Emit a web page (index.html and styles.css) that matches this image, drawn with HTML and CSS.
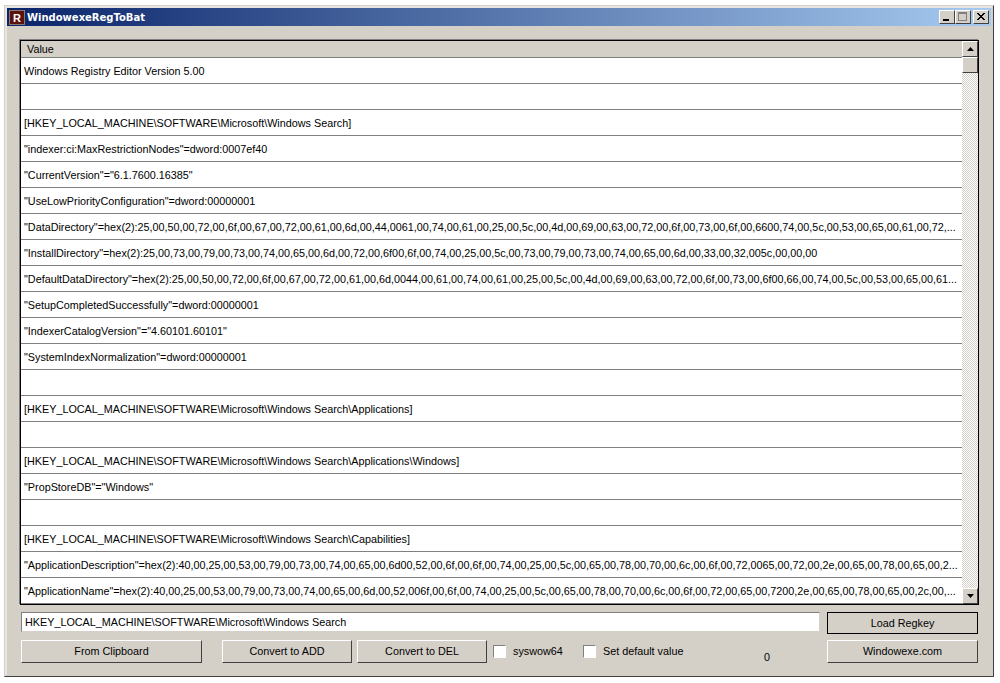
FILE: index.html
```html
<!DOCTYPE html>
<html lang="en">
<head>
<meta charset="utf-8">
<title>WindowexeRegToBat</title>
<link rel="stylesheet" href="styles.css">
</head>
<body>
<div class="window">
  <div class="titlebar">
    <svg class="app-icon" width="16" height="15" viewBox="0 0 16 15"><rect width="16" height="15" fill="#8c7a76"/><rect x="1" y="1" width="14" height="13" fill="#5a120c"/><text x="8" y="12" text-anchor="middle" class="icon-letter">R</text></svg>
    <span class="title">WindowexeRegToBat</span>
    <div class="caption-buttons">
      <button class="cap"><svg width="16" height="14" viewBox="0 0 16 14"><rect x="4" y="9" width="6" height="2" fill="#000"/></svg></button>
      <button class="cap"><svg width="16" height="14" viewBox="0 0 16 14"><rect x="3.500" y="2.500" width="8" height="8" fill="none" stroke="#808080"/><rect x="3" y="2" width="9" height="2" fill="#808080"/></svg></button>
      <button class="cap cap-close"><svg width="16" height="14" viewBox="0 0 16 14"><path d="M4 3l7 7M5 3l7 7M11 3l-7 7M12 3l-7 7" stroke="#000" fill="none"/></svg></button>
    </div>
  </div>
  <div class="client">
    <div class="list">
      <div class="table">
        <div class="head">Value</div>
        <div class="row">Windows Registry Editor Version 5.00</div>
        <div class="row"></div>
        <div class="row">[HKEY_LOCAL_MACHINE\SOFTWARE\Microsoft\Windows Search]</div>
        <div class="row">"indexer:ci:MaxRestrictionNodes"=dword:0007ef40</div>
        <div class="row">"CurrentVersion"="6.1.7600.16385"</div>
        <div class="row">"UseLowPriorityConfiguration"=dword:00000001</div>
        <div class="row">"DataDirectory"=hex(2):25,00,50,00,72,00,6f,00,67,00,72,00,61,00,6d,00,44,0061,00,74,00,61,00,25,00,5c,00,4d,00,69,00,63,00,72,00,6f,00,73,00,6f,00,6600,74,00,5c,00,53,00,65,00,61,00,72,...</div>
        <div class="row">"InstallDirectory"=hex(2):25,00,73,00,79,00,73,00,74,00,65,00,6d,00,72,00,6f00,6f,00,74,00,25,00,5c,00,73,00,79,00,73,00,74,00,65,00,6d,00,33,00,32,005c,00,00,00</div>
        <div class="row">"DefaultDataDirectory"=hex(2):25,00,50,00,72,00,6f,00,67,00,72,00,61,00,6d,0044,00,61,00,74,00,61,00,25,00,5c,00,4d,00,69,00,63,00,72,00,6f,00,73,00,6f00,66,00,74,00,5c,00,53,00,65,00,61...</div>
        <div class="row">"SetupCompletedSuccessfully"=dword:00000001</div>
        <div class="row">"IndexerCatalogVersion"="4.60101.60101"</div>
        <div class="row">"SystemIndexNormalization"=dword:00000001</div>
        <div class="row"></div>
        <div class="row">[HKEY_LOCAL_MACHINE\SOFTWARE\Microsoft\Windows Search\Applications]</div>
        <div class="row"></div>
        <div class="row">[HKEY_LOCAL_MACHINE\SOFTWARE\Microsoft\Windows Search\Applications\Windows]</div>
        <div class="row">"PropStoreDB"="Windows"</div>
        <div class="row"></div>
        <div class="row">[HKEY_LOCAL_MACHINE\SOFTWARE\Microsoft\Windows Search\Capabilities]</div>
        <div class="row">"ApplicationDescription"=hex(2):40,00,25,00,53,00,79,00,73,00,74,00,65,00,6d00,52,00,6f,00,6f,00,74,00,25,00,5c,00,65,00,78,00,70,00,6c,00,6f,00,72,0065,00,72,00,2e,00,65,00,78,00,65,00,2...</div>
        <div class="row">"ApplicationName"=hex(2):40,00,25,00,53,00,79,00,73,00,74,00,65,00,6d,00,52,006f,00,6f,00,74,00,25,00,5c,00,65,00,78,00,70,00,6c,00,6f,00,72,00,65,00,7200,2e,00,65,00,78,00,65,00,2c,00,...</div>
      </div>
      <div class="scrollbar">
        <div class="sb-btn"><svg width="7" height="4" viewBox="0 0 7 4"><path d="M3.500 0L7 4H0z" fill="#000"/></svg></div>
        <div class="sb-thumb"></div>
        <div class="sb-track"></div>
        <div class="sb-btn"><svg width="7" height="4" viewBox="0 0 7 4"><path d="M0 0H7L3.500 4z" fill="#000"/></svg></div>
      </div>
    </div>
    <div class="controls">
      <div class="line-one">
        <input class="edit" type="text" value="HKEY_LOCAL_MACHINE\SOFTWARE\Microsoft\Windows Search">
        <button class="btn btn-default load">Load Regkey</button>
      </div>
      <div class="line-two">
        <button class="btn clip">From Clipboard</button>
        <button class="btn conv">Convert to ADD</button>
        <button class="btn conv">Convert to DEL</button>
        <label class="check sys"><span class="box"></span>syswow64</label>
        <label class="check def"><span class="box"></span>Set default value</label>
        <span class="count">0</span>
        <button class="btn load">Windowexe.com</button>
      </div>
    </div>
  </div>
</div>
</body>
</html>
```
FILE: styles.css
```css
* { box-sizing: border-box; }
html, body { margin: 0; background: #fff; }
body { padding: 5px 0 0 4px; font-family: "Liberation Sans", Arial, sans-serif; font-size: 10.8px; color: #000; }
.window { width: 990px; height: 672px; background: #d4d0c8; border: 3px solid #d4d0c8; border-top-color: #e8e6e0; border-left-color: #e8e6e0; position: relative; display: flex; flex-direction: column; }
.window::after { content: ""; position: absolute; left: -3px; right: -3px; top: -3px; bottom: -3px; border: 1px solid; border-color: #d4d0c8 #404040 #404040 #d4d0c8; pointer-events: none; }
.titlebar { height: 18px; background: linear-gradient(90deg, #0a246a, #a6caf0); display: flex; align-items: center; padding: 0 2px; color: #fff; flex: none; }
.app-icon { flex: none; margin-right: 2px; }
.icon-letter { font: bold 11px "Liberation Sans", sans-serif; fill: #fff; }
.title { font: bold 10px "DejaVu Sans", sans-serif; white-space: nowrap; }
.caption-buttons { margin-left: auto; display: flex; }
.cap { width: 16px; height: 14px; padding: 0; background: #d4d0c8; border: 1px solid; border-color: #fff #404040 #404040 #fff; display: block; line-height: 0; }
.cap svg { display: block; margin: -1px; }
.cap-close { margin-left: 2px; }
.client { padding: 14px 12px 0 13px; display: flex; flex-direction: column; flex: 1; }
.list { height: 565px; display: flex; border: 1px solid #000; box-shadow: -1px -1px 0 #808080; background: #fff; }
.table { flex: 1; min-width: 0; overflow: hidden; }
.head { height: 17px; background: #d4d0c8; border-bottom: 1px solid #808080; padding-left: 6px; line-height: 16px; }
.row { height: 26px; border-bottom: 1px solid #808080; padding: 1px 2px 0 3px; line-height: 24px; white-space: nowrap; }
.scrollbar { width: 16px; flex: none; display: flex; flex-direction: column; }
.sb-btn, .sb-thumb { background: #d4d0c8; border: 1px solid; border-color: #fff #404040 #404040 #fff; flex: none; }
.sb-btn { height: 16px; display: flex; align-items: center; justify-content: center; }
.sb-thumb { height: 16px; }
.sb-track { flex: 1; background-color: #fff; background-image: conic-gradient(#d4d0c8 25%, #fff 0 50%, #d4d0c8 0 75%, #fff 0); background-size: 2px 2px; }
.controls { display: flex; flex-direction: column; gap: 5px; padding: 7px 0 0 1px; }
.line-one, .line-two { display: flex; }
.line-one { align-items: flex-start; }
.line-two { align-items: center; }
.edit { width: 799px; height: 20px; border: 1px solid; border-color: #808080 #d4d0c8 #d4d0c8 #808080; font: 10.8px "Liberation Sans", sans-serif; padding: 0 0 0 3px; margin-right: 7px; background: #fff; }
.btn { height: 23px; background: #d4d0c8; border: 1px solid; border-color: #fff #404040 #404040 #fff; font: 10.8px "Liberation Sans", sans-serif; padding: 0; color: #000; }
.btn-default { height: 22px; outline: 1px solid #000; outline-offset: -1px; }
.load { width: 151px; }
.clip { width: 181px; margin-right: 20px; }
.conv { width: 130px; margin-right: 5px; }
.check { display: flex; align-items: center; white-space: nowrap; }
.box { width: 13px; height: 13px; background: #fff; border: 1px solid; border-color: #808080 #fff #fff #808080; margin-right: 7px; flex: none; }
.sys { margin-left: 1px; width: 90px; }
.def { width: 181px; }
.count { width: 63px; margin-top: 12px; }
```
